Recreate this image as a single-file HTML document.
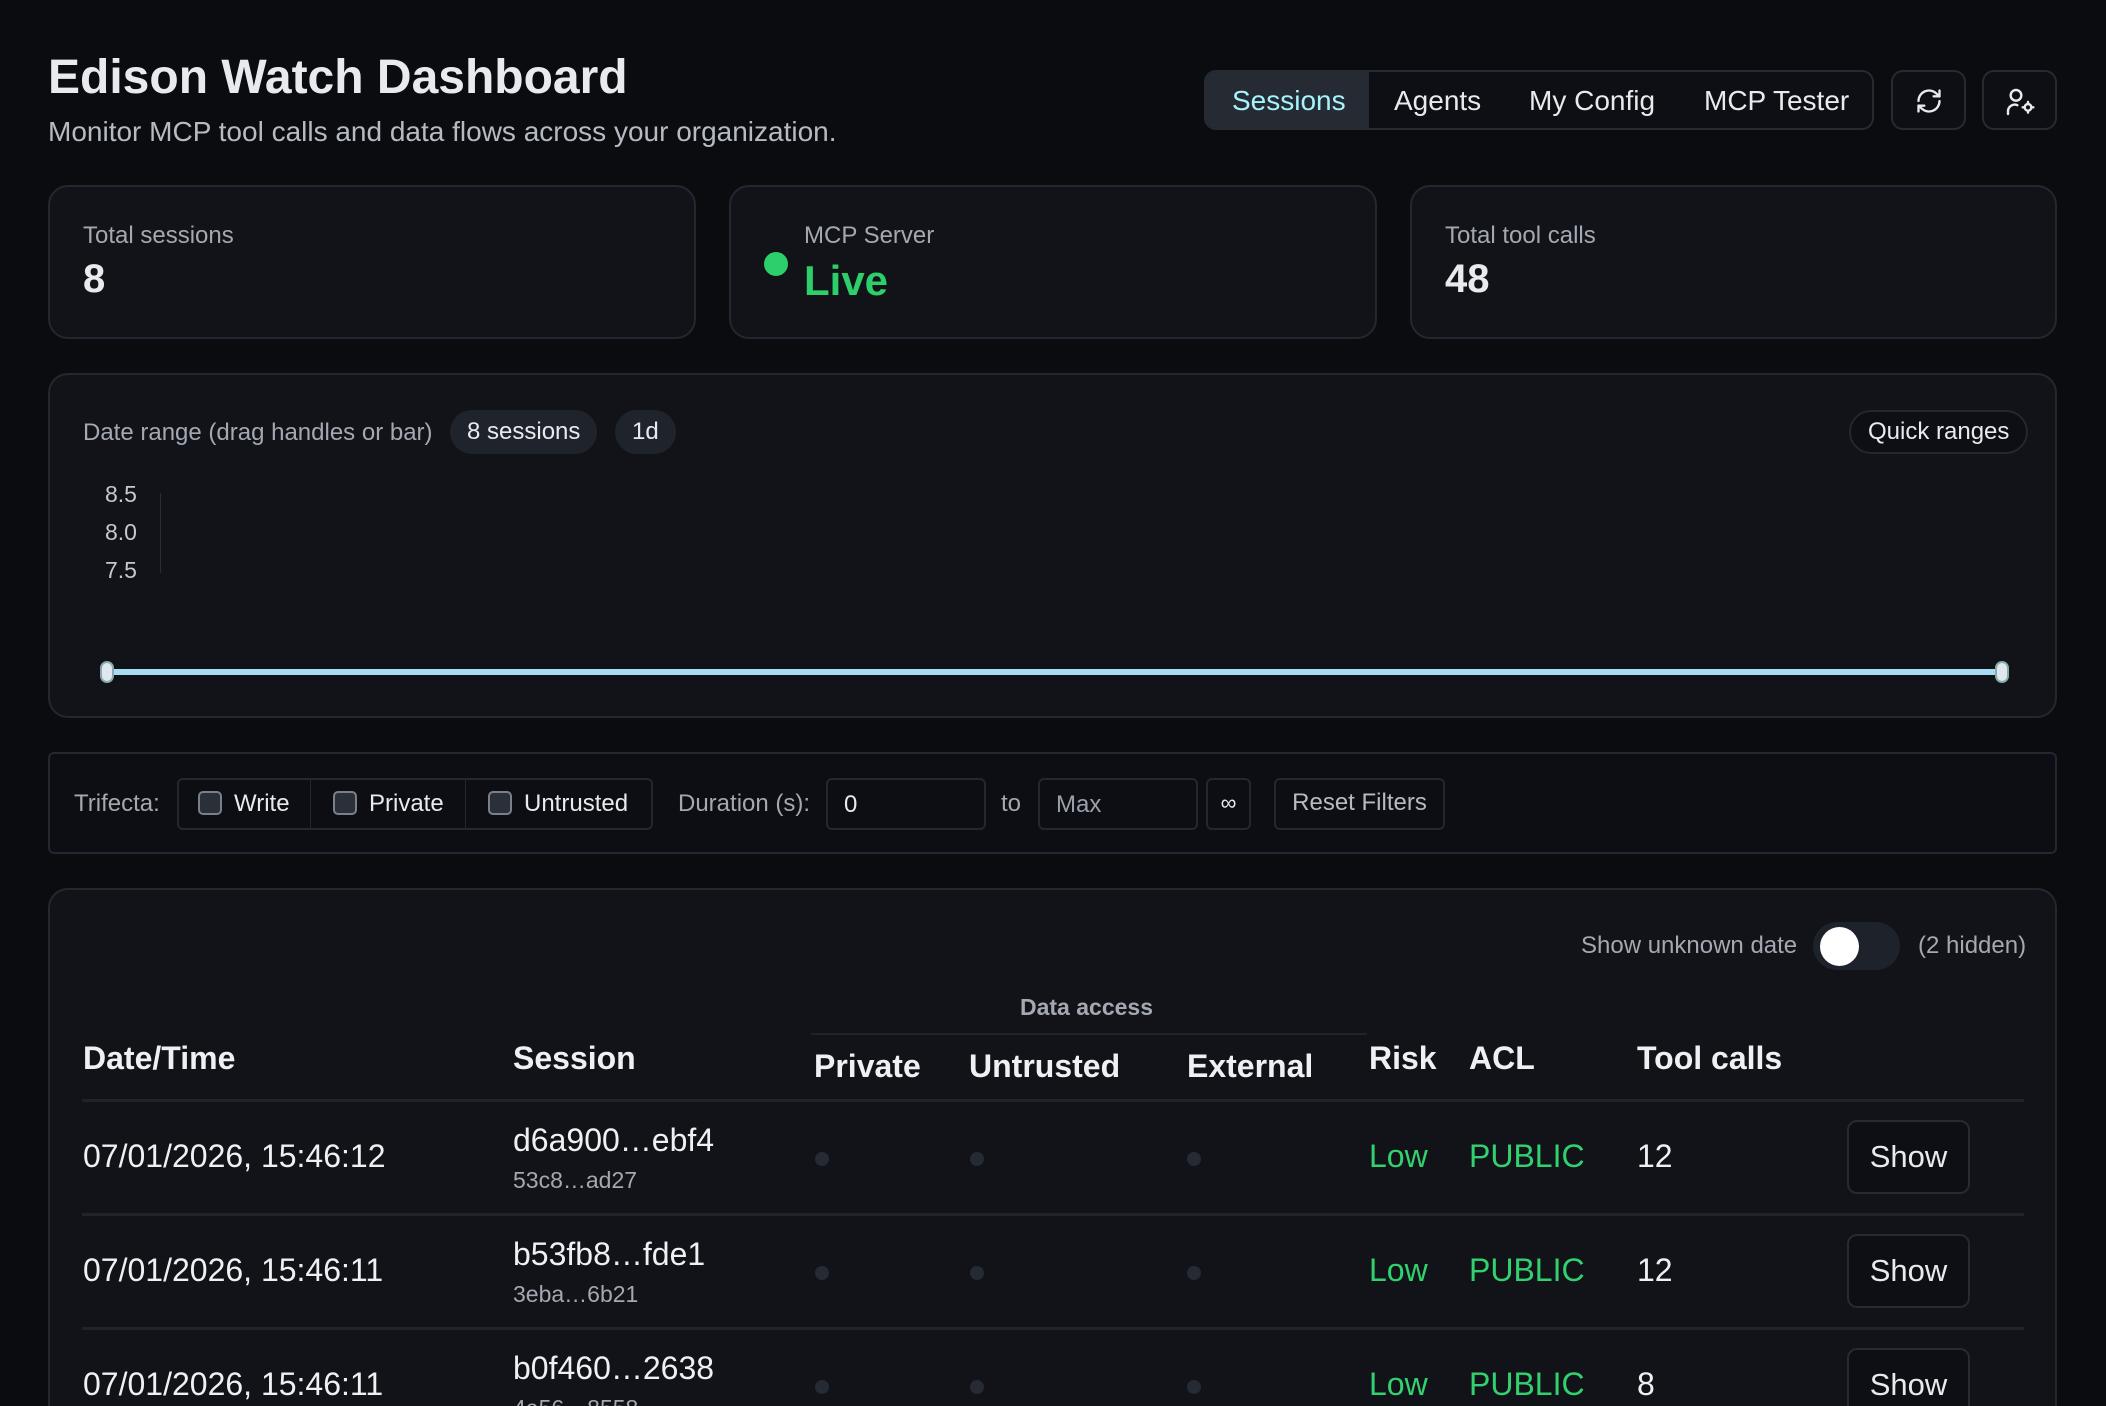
<!DOCTYPE html>
<html style="width:2106px;height:1406px;overflow:hidden"><head><meta charset="utf-8"><style>
*{box-sizing:border-box;margin:0;padding:0}
body{width:2106px;height:1406px;overflow:hidden;background:#0a0c10;font-family:"Liberation Sans",sans-serif;color:#e8eaee;position:relative}
.abs{position:absolute}
.card{position:absolute;background:#111318;border:2px solid #23272f;border-radius:20px}
.lbl{color:#a3a8b2;font-size:24px}
.pill{position:absolute;background:#1f232b;border-radius:22px;color:#e8eaee;font-size:24px;height:44px;line-height:44px;padding:0 17px}
.btn{position:absolute;border:2px solid #262a33;border-radius:12px;background:#0d0f14}
.th{position:absolute;font-weight:bold;font-size:32px;color:#eef0f3}
.td{position:absolute;font-size:32px;color:#eef0f3}
.g{color:#32d16f}
.dot{position:absolute;width:14px;height:14px;border-radius:50%;background:#262a33}
.line{position:absolute;left:82px;width:1942px;height:3px;background:#1f232b}
.chk{display:inline-block;width:24px;height:24px;border:2px solid #7a808b;border-radius:5px;background:#2a2f38;vertical-align:-4px;margin-right:12px}
</style></head><body>
<div class="abs" style="left:48px;top:50px;font-size:48px;font-weight:bold">Edison Watch Dashboard</div>
<div class="abs" style="left:48px;top:116px;font-size:28px;color:#b6bac2">Monitor MCP tool calls and data flows across your organization.</div>

<div class="btn" style="left:1204px;top:70px;width:670px;height:60px;overflow:hidden">
 <div class="abs" style="left:0;top:0;width:163px;height:56px;background:#262b33"></div>
 <div class="abs" style="left:26px;top:13px;font-size:28px;color:#a5f3fc">Sessions</div>
 <div class="abs" style="left:188px;top:13px;font-size:28px">Agents</div>
 <div class="abs" style="left:323px;top:13px;font-size:28px">My Config</div>
 <div class="abs" style="left:498px;top:13px;font-size:28px">MCP Tester</div>
</div>
<div class="btn" style="left:1891px;top:70px;width:75px;height:60px">
<svg class="abs" style="left:22px;top:15px" width="28" height="28" viewBox="0 0 24 24" fill="none" stroke="#e8eaee" stroke-width="2" stroke-linecap="round" stroke-linejoin="round"><path d="M3 12a9 9 0 0 1 15-6.7L21 8"/><path d="M21 3v5h-5"/><path d="M21 12a9 9 0 0 1-15 6.7L3 16"/><path d="M8 16H3v5"/></svg></div>
<div class="btn" style="left:1982px;top:70px;width:75px;height:60px">
<svg class="abs" style="left:20px;top:14px" width="32" height="32" viewBox="0 0 24 24" fill="none" stroke="#e8eaee" stroke-width="1.8" stroke-linecap="round"><circle cx="9" cy="7" r="4"/><path d="M3 21v-2a5 5 0 0 1 7-4.6"/><circle cx="18" cy="16" r="2.5"/><path d="M18 12v1.5M18 18.5V20M14 16h1.5M20.5 16H22"/></svg></div>

<div class="card" style="left:48px;top:185px;width:648px;height:154px">
 <div class="abs lbl" style="left:33px;top:35px">Total sessions</div>
 <div class="abs" style="left:33px;top:70px;font-size:40px;font-weight:bold">8</div></div>
<div class="card" style="left:729px;top:185px;width:648px;height:154px">
 <div class="abs" style="left:33px;top:65px;width:24px;height:24px;border-radius:50%;background:#2ccf6a"></div>
 <div class="abs lbl" style="left:73px;top:35px">MCP Server</div>
 <div class="abs" style="left:73px;top:70px;font-size:42px;font-weight:bold;color:#2ccf6a">Live</div></div>
<div class="card" style="left:1410px;top:185px;width:647px;height:154px">
 <div class="abs lbl" style="left:33px;top:35px">Total tool calls</div>
 <div class="abs" style="left:33px;top:70px;font-size:40px;font-weight:bold">48</div></div>

<div class="card" style="left:48px;top:373px;width:2009px;height:345px">
 <div class="abs lbl" style="left:33px;top:44px">Date range (drag handles or bar)</div>
 <div class="pill" style="left:400px;top:35px">8 sessions</div>
 <div class="pill" style="left:565px;top:35px">1d</div>
 <div class="pill" style="left:1799px;top:35px;background:#0d0f14;border:2px solid #23272f;line-height:40px">Quick ranges</div>
 <div class="abs" style="left:55px;top:100px;font-size:23px;color:#c4c8cf;line-height:38px">8.5<br>8.0<br>7.5</div>
 <div class="abs" style="left:110px;top:118px;width:1px;height:80px;background:#2a2e36"></div>
 <div class="abs" style="left:57px;top:294px;width:1900px;height:6px;background:#a8dcf5;border-radius:3px"></div>
 <div class="abs" style="left:50px;top:286px;width:14px;height:22px;border-radius:7px;background:#dfe8ee;border:2px solid #8aa"></div>
 <div class="abs" style="left:1945px;top:286px;width:14px;height:22px;border-radius:7px;background:#dfe8ee;border:2px solid #8aa"></div>
</div>

<div class="card" style="left:48px;top:752px;width:2009px;height:102px;border-radius:6px;background:#0c0e13">
 <div class="abs lbl" style="left:24px;top:36px">Trifecta:</div>
 <div class="abs" style="left:127px;top:24px;width:476px;height:52px;border:2px solid #23272f;border-radius:6px"></div>
 <div class="abs" style="left:260px;top:26px;width:1px;height:48px;background:#23272f"></div>
 <div class="abs" style="left:415px;top:26px;width:1px;height:48px;background:#23272f"></div>
 <div class="abs" style="left:148px;top:36px;font-size:24px"><span class="chk"></span>Write</div>
 <div class="abs" style="left:283px;top:36px;font-size:24px"><span class="chk"></span>Private</div>
 <div class="abs" style="left:438px;top:36px;font-size:24px"><span class="chk"></span>Untrusted</div>
 <div class="abs lbl" style="left:628px;top:36px">Duration (s):</div>
 <div class="abs" style="left:776px;top:24px;width:160px;height:52px;border:2px solid #23272f;border-radius:6px;font-size:24px;padding:11px 16px">0</div>
 <div class="abs lbl" style="left:951px;top:36px">to</div>
 <div class="abs" style="left:988px;top:24px;width:160px;height:52px;border:2px solid #23272f;border-radius:6px;font-size:24px;padding:11px 16px;color:#9aa0aa">Max</div>
 <div class="abs" style="left:1156px;top:24px;width:45px;height:52px;border:2px solid #23272f;border-radius:6px;font-size:22px;text-align:center;line-height:46px">∞</div>
 <div class="abs" style="left:1224px;top:24px;width:171px;height:52px;border:2px solid #23272f;border-radius:6px;font-size:24px;text-align:center;line-height:46px;color:#b6bac2">Reset Filters</div>
</div>

<div class="card" style="left:48px;top:888px;width:2009px;height:540px">
 <div class="abs lbl" style="left:1531px;top:42px">Show unknown date</div>
 <div class="abs" style="left:1763px;top:32px;width:87px;height:48px;border-radius:24px;background:#1e222a"></div>
 <div class="abs" style="left:1770px;top:37px;width:39px;height:39px;border-radius:50%;background:#fff"></div>
 <div class="abs lbl" style="left:1868px;top:42px">(2 hidden)</div>
</div>
<div class="abs" style="left:1020px;top:994px;font-size:23px;font-weight:bold;color:#a3a8b2">Data access</div>
<div class="abs" style="left:811px;top:1033px;width:556px;height:2px;background:#1f232b"></div>
<div class="th" style="left:83px;top:1040px">Date/Time</div>
<div class="th" style="left:513px;top:1040px">Session</div>
<div class="th" style="left:814px;top:1048px">Private</div>
<div class="th" style="left:969px;top:1048px">Untrusted</div>
<div class="th" style="left:1187px;top:1048px">External</div>
<div class="th" style="left:1369px;top:1040px">Risk</div>
<div class="th" style="left:1469px;top:1040px">ACL</div>
<div class="th" style="left:1637px;top:1040px">Tool calls</div>
<div class="line" style="top:1099px"></div>

<div class="td" style="left:83px;top:1138px">07/01/2026, 15:46:12</div>
<div class="td" style="left:513px;top:1122px">d6a900…ebf4</div>
<div class="abs" style="left:513px;top:1167px;font-size:23px;color:#a3a8b2">53c8…ad27</div>
<div class="dot" style="left:815px;top:1152px"></div><div class="dot" style="left:970px;top:1152px"></div><div class="dot" style="left:1187px;top:1152px"></div>
<div class="td g" style="left:1369px;top:1138px">Low</div><div class="td g" style="left:1469px;top:1138px">PUBLIC</div><div class="td" style="left:1637px;top:1138px">12</div>
<div class="btn" style="left:1847px;top:1120px;width:123px;height:74px;font-size:31px;text-align:center;line-height:70px;border-radius:10px">Show</div>
<div class="line" style="top:1213px"></div>

<div class="td" style="left:83px;top:1252px">07/01/2026, 15:46:11</div>
<div class="td" style="left:513px;top:1236px">b53fb8…fde1</div>
<div class="abs" style="left:513px;top:1281px;font-size:23px;color:#a3a8b2">3eba…6b21</div>
<div class="dot" style="left:815px;top:1266px"></div><div class="dot" style="left:970px;top:1266px"></div><div class="dot" style="left:1187px;top:1266px"></div>
<div class="td g" style="left:1369px;top:1252px">Low</div><div class="td g" style="left:1469px;top:1252px">PUBLIC</div><div class="td" style="left:1637px;top:1252px">12</div>
<div class="btn" style="left:1847px;top:1234px;width:123px;height:74px;font-size:31px;text-align:center;line-height:70px;border-radius:10px">Show</div>
<div class="line" style="top:1327px"></div>

<div class="td" style="left:83px;top:1366px">07/01/2026, 15:46:11</div>
<div class="td" style="left:513px;top:1350px">b0f460…2638</div>
<div class="abs" style="left:513px;top:1395px;font-size:23px;color:#a3a8b2">4a56…8558</div>
<div class="dot" style="left:815px;top:1380px"></div><div class="dot" style="left:970px;top:1380px"></div><div class="dot" style="left:1187px;top:1380px"></div>
<div class="td g" style="left:1369px;top:1366px">Low</div><div class="td g" style="left:1469px;top:1366px">PUBLIC</div><div class="td" style="left:1637px;top:1366px">8</div>
<div class="btn" style="left:1847px;top:1348px;width:123px;height:74px;font-size:31px;text-align:center;line-height:70px;border-radius:10px">Show</div>
</body></html>
